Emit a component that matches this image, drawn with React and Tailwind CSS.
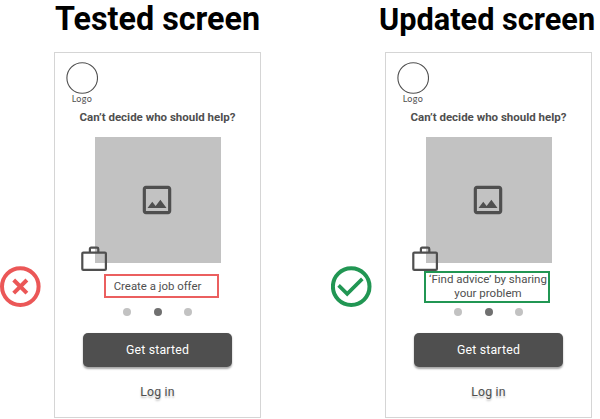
function CrossCircle() {
  return (
    <svg className="block h-[42px] w-[42px]" viewBox="0 0 42 42" fill="none" stroke="#eb5757">
      <circle cx="20.3" cy="20.6" r="18.3" strokeWidth="4" />
      <path d="M13.7 14 L26.9 27.2 M26.9 14 L13.7 27.2" strokeWidth="4" />
    </svg>
  );
}

function CheckCircle() {
  return (
    <svg className="block h-[42px] w-[42px]" viewBox="0 0 42 42" fill="none" stroke="#219653">
      <circle cx="20.2" cy="20.6" r="18.3" strokeWidth="4" />
      <path d="M7.6 19.4 L16.2 27.9 L31.3 12.9" strokeWidth="3.6" />
    </svg>
  );
}

function ImageIcon() {
  return (
    <svg className="mr-[2px] block h-[38px] w-[38px]" viewBox="0 0 24 24" fill="#4f4f4f">
      <path d="M19 5v14H5V5h14m0-2H5c-1.1 0-2 .9-2 2v14c0 1.1.9 2 2 2h14c1.1 0 2-.9 2-2V5c0-1.1-.9-2-2-2zm-4.86 8.86l-3 3.87L9 13.14 6 17h12l-3.86-5.14z" />
    </svg>
  );
}

function Briefcase() {
  return (
    <svg
      className="absolute top-[109px] -left-[14px] h-[26px] w-[27px]"
      viewBox="0 0 27 26"
      fill="none"
      stroke="#4f4f4f"
      strokeWidth="2.2"
    >
      <rect x="1.3" y="6.6" width="23.6" height="17.3" rx="1" />
      <path d="M8.9 6.4 V3 Q8.9 1.7 10.2 1.7 H16 Q17.3 1.7 17.3 3 V6.4" />
    </svg>
  );
}

function Phone({ children }) {
  return (
    <div className="flex h-[366px] w-[207px] flex-col border border-[#d5d5d5] bg-white text-[#4f4f4f]">
      <div className="mt-[9px] ml-[11px] flex w-8 flex-col items-center">
        <svg className="block h-8 w-8" viewBox="0 0 32 32" fill="none" stroke="#4f4f4f" strokeWidth="1.1">
          <circle cx="16.2" cy="16" r="15.3" />
        </svg>
        <span className="font-[Lato,sans-serif] text-[9px] leading-[9px] tracking-[0.4px]">Logo</span>
      </div>
      <h2 className="mt-[7px] h-[14px] text-center text-[11.5px] leading-[15px] font-bold whitespace-nowrap">
        Can’t decide who should help?
      </h2>
      <div className="relative mt-[13px] ml-10 flex h-[126px] w-[126px] items-center justify-center bg-[#c2c2c2]">
        <ImageIcon />
        <Briefcase />
      </div>
      <div className="h-[45px]">{children}</div>
      <div className="ml-[68px] flex w-[69px] justify-between">
        <i className="h-2 w-2 rounded-full bg-[#c2c2c2]" />
        <i className="h-2 w-2 rounded-full bg-[#707070]" />
        <i className="h-2 w-2 rounded-full bg-[#c2c2c2]" />
      </div>
      <button className="mt-[17px] ml-7 h-[34px] w-[149px] rounded-[5px] bg-[#4f4f4f] pt-px text-[12.3px] tracking-[0.2px] text-white shadow-[0_1.5px_2px_rgba(0,0,0,0.35)]">
        Get started
      </button>
      <a className="mt-[17px] text-center text-[12.3px] leading-4 tracking-[0.2px] [text-shadow:0_2px_2px_rgba(0,0,0,0.25)]">
        Log in
      </a>
    </div>
  );
}

export default function App() {
  return (
    <main className="flex h-[419px] w-[600px] overflow-hidden bg-white font-[Roboto,sans-serif]">
      <section className="flex w-[331px]">
        <div className="w-[54px] pt-[266px]">
          <CrossCircle />
        </div>
        <div className="w-[207px]">
          <h1 className="ml-px h-[52px] text-[32.3px] leading-[38px] font-bold whitespace-nowrap text-black">Tested screen</h1>
          <Phone>
            <div className="mt-[11px] ml-[49px] flex h-6 w-[115px] items-center justify-center border-2 border-[#eb5f5f] pr-2 text-[11.4px] leading-[14px] whitespace-nowrap">
              Create a job offer
            </div>
          </Phone>
        </div>
      </section>
      <section className="flex w-[269px]">
        <div className="w-[54px] shrink-0 pt-[266px]">
          <CheckCircle />
        </div>
        <div className="w-[207px] shrink-0">
          <h1 className="-ml-1.5 h-[52px] pt-px text-[30.7px] leading-[38px] font-bold whitespace-nowrap text-black">Updated screen</h1>
          <Phone>
            <div className="relative top-2 ml-[38px] flex h-8 w-[126px] justify-center border-2 border-[#219653] text-center text-[11.5px] leading-[14px] whitespace-nowrap">
              <p className="-mt-px ml-0.5">
                ‘Find advice’ by sharing
                <br />
                your problem
              </p>
            </div>
          </Phone>
        </div>
      </section>
    </main>
  );
}
